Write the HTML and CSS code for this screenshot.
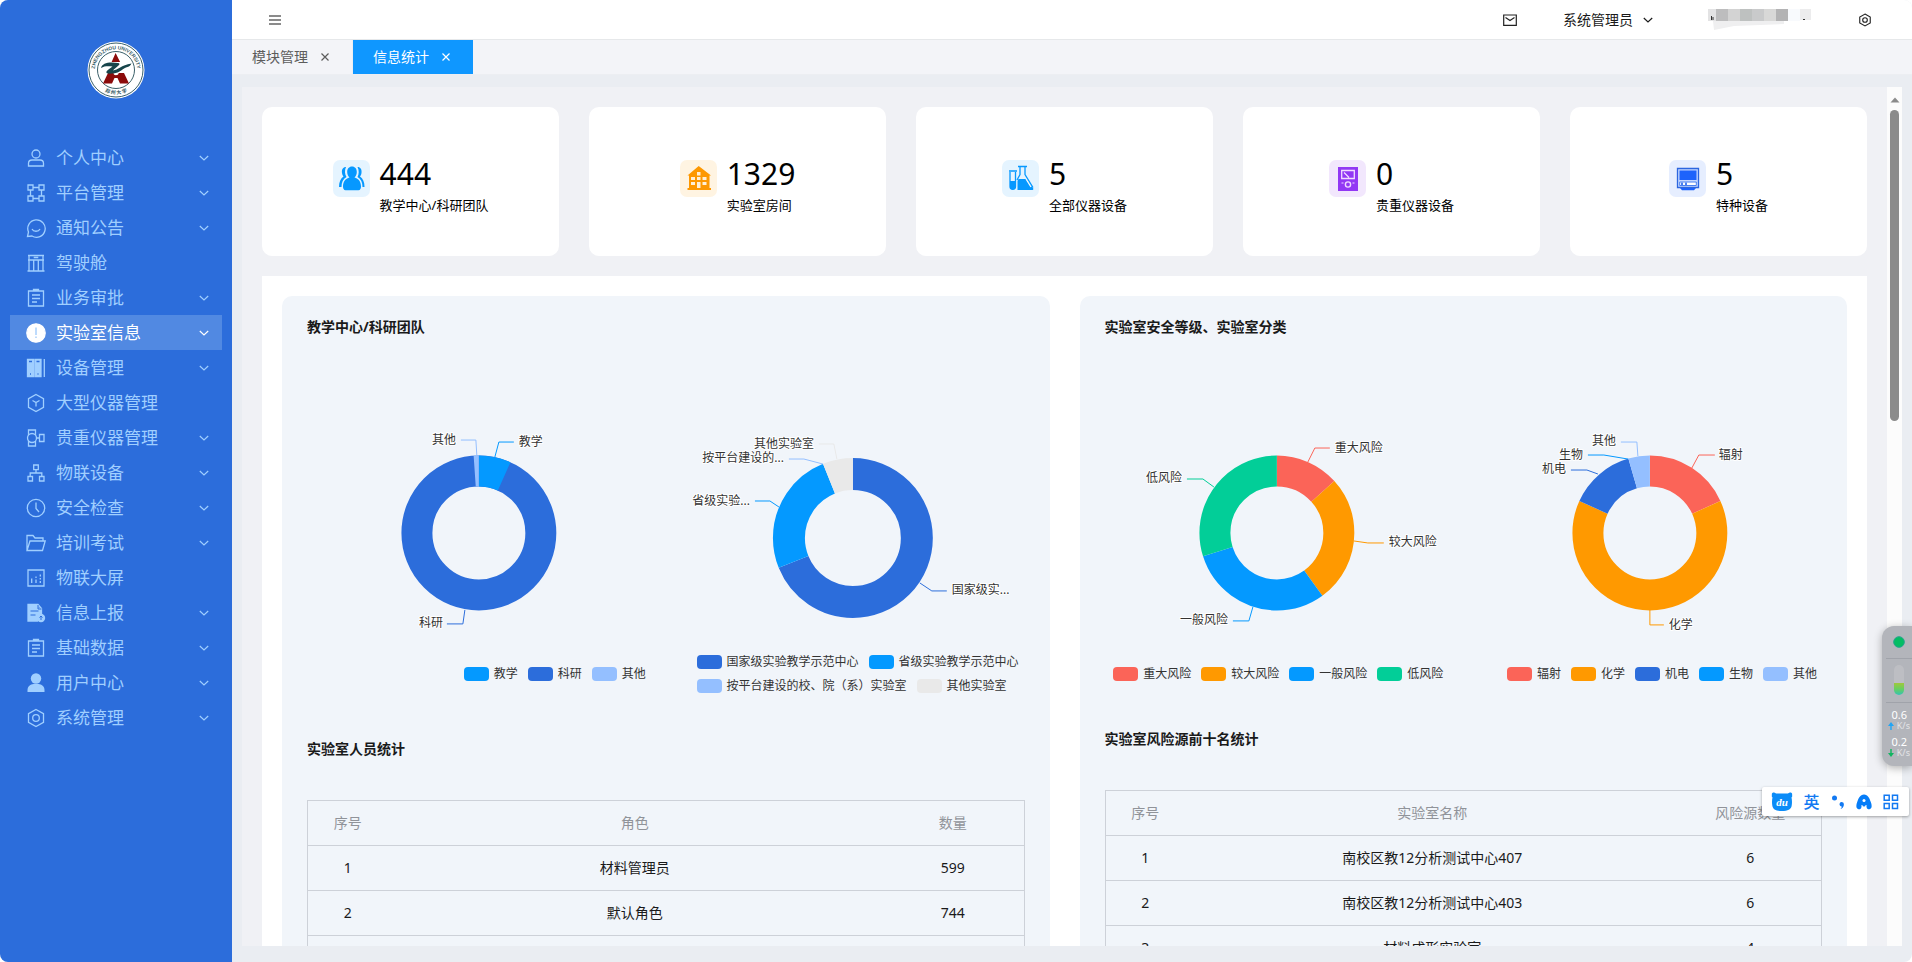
FILE: index.html
```html
<!DOCTYPE html>
<html lang="zh-CN">
<head>
<meta charset="utf-8">
<title>信息统计</title>
<link rel="stylesheet" href="styles.css">
</head>
<body>
<svg class="defs" aria-hidden="true">
  <symbol id="chev" viewBox="0 0 10 10"><path d="M.8 3 5 7l4.200-4" fill="none" stroke="currentColor" stroke-width="1.200"/></symbol>
  <symbol id="x" viewBox="0 0 10 10"><path d="M1.500 1.500l7 7M8.500 1.500l-7 7" fill="none" stroke="currentColor" stroke-width="1.200"/></symbol>
  <symbol id="clip" viewBox="0 0 20 20"><path d="M2.500 3h15v15h-15zM7.500 3V1.500h5V3M6 7h8M6 10.500h8M6 14h5"/></symbol>
  <symbol id="hexnut" viewBox="0 0 20 20"><path d="M10 1.500l7.500 4.250v8.500L10 18.500l-7.500-4.250v-8.500z"/><circle cx="10" cy="10" r="3.300"/></symbol>
</svg>
<div class="app">
  <aside class="sidebar">
    <div class="brand">
      <svg class="logo" viewBox="0 0 58 58" role="img" aria-label="ZHENGZHOU UNIVERSITY">
        <circle cx="29" cy="29" r="28.500" fill="#fff"/>
        <circle cx="29" cy="29" r="27" fill="none" stroke="#3b6069" stroke-width="1"/>
        <circle cx="29" cy="29" r="18.500" fill="none" stroke="#3b6069" stroke-width="1"/>
        <path id="arcTop" d="M9 36.500A21.200 21.200 0 1 1 49 36.500" fill="none"/>
        <path id="arcLow" d="M11.500 46A24.500 24.500 0 0 0 46.500 46" fill="none"/>
        <text class="seal"><textPath href="#arcTop" startOffset="50%" text-anchor="middle">ZHENGZHOU UNIVERSITY</textPath></text>
        <text class="seal seal-cn"><textPath href="#arcLow" startOffset="50%" text-anchor="middle">郑 州 大 学</textPath></text>
        <path d="M28.600 12l-4 9h8.500zM21 32h5.500c-.2 3 5 3 5.200 0H37l5 10.500h-9l-2.500-5.500h-3L25 42.500h-9z" fill="#8b0b0b"/>
        <path d="M14 27c1-5 8-6.500 17-5 1.500.3 2 1 1 2-2 2-5 4-6 5.500 5-.5 8-5.500 18.500-7-1 2-2 3-4 3.500-4 1-8 6-14 6.500-5 .4-8 .1-7-2 1-1.800 4-3.500 6-5-5-.4-8-.5-11.500 1.500z" fill="#17454b"/>
      </svg>
    </div>
    <nav class="menu">
      <button class="item"><svg class="ico" viewBox="0 0 20 20"><circle cx="10" cy="6" r="4"/><path d="M2.500 18v-2.500c0-2 1.500-3.500 3.500-3.500h8c2 0 3.500 1.500 3.500 3.500V18z"/></svg><span>个人中心</span><svg class="chev"><use href="#chev"/></svg></button>
      <button class="item"><svg class="ico" viewBox="0 0 20 20"><path d="M2 2h5v5H2zM13 2h5v5h-5zM2 13h5v5H2zM13 13h5v5h-5zM7 4.500h6M7 15.500h6M4.500 7v6M15.500 7v6"/></svg><span>平台管理</span><svg class="chev"><use href="#chev"/></svg></button>
      <button class="item"><svg class="ico" viewBox="0 0 20 20"><path d="M1.500 18.500l1-4.500A8.700 8.700 0 1 1 6 18zM6 11c1.500 3 6.500 3 8 0"/></svg><span>通知公告</span><svg class="chev"><use href="#chev"/></svg></button>
      <a class="item" href="#cockpit"><svg class="ico" viewBox="0 0 20 20"><path d="M2 2.500h16M3 2.500v15.500M17 2.500v15.500M2 7h16M7.700 7v11M12.300 7v11M1.500 18h17M7.700 4.500h4.600"/></svg><span>驾驶舱</span></a>
      <button class="item"><svg class="ico"><use href="#clip"/></svg><span>业务审批</span><svg class="chev"><use href="#chev"/></svg></button>
      <button class="item active"><svg class="ico" viewBox="0 0 20 20"><circle cx="10" cy="10" r="9.200" fill="#fff"/><path d="M10 4.500v7.500M10 13.500v1.500" stroke="#9cc8fa"/></svg><span>实验室信息</span><svg class="chev"><use href="#chev"/></svg></button>
      <button class="item"><svg class="ico" viewBox="0 0 20 20"><path d="M1.500 1.500h6v17h-6zM9 1.500h6v17H9z" fill="currentColor"/><path d="M18.300 1v18"/><path d="M3 3.500h3M10.500 3.500h3M4 16h1M11.500 16h1" stroke="#2c6ddb"/></svg><span>设备管理</span><svg class="chev"><use href="#chev"/></svg></button>
      <a class="item" href="#large"><svg class="ico" viewBox="0 0 20 20"><path d="M10 1.500l7.500 4.250v8.500L10 18.500l-7.500-4.250v-8.500zM6.500 7.500L10 9.500l3.500-2M10 9.500V13.500"/></svg><span>大型仪器管理</span></a>
      <button class="item"><svg class="ico" viewBox="0 0 20 20"><circle cx="6" cy="10" r="4.500"/><path d="M2.500 7V2h7v5M2.500 13v5h7v-5M10.500 10h3M13.500 6.500h4.500v7h-4.500z"/></svg><span>贵重仪器管理</span><svg class="chev"><use href="#chev"/></svg></button>
      <button class="item"><svg class="ico" viewBox="0 0 20 20"><path d="M7.700 2h4.600v4.600H7.700zM2 13.500h4.500V18H2zM13.500 13.500H18V18h-4.500zM10 6.600V10M4.200 13.500V10h11.600v3.500"/></svg><span>物联设备</span><svg class="chev"><use href="#chev"/></svg></button>
      <button class="item"><svg class="ico" viewBox="0 0 20 20"><circle cx="10" cy="10" r="8.700"/><path d="M10 4.500V10.500l3 3.500"/></svg><span>安全检查</span><svg class="chev"><use href="#chev"/></svg></button>
      <button class="item"><svg class="ico" viewBox="0 0 20 20"><path d="M1 17V2.500h6l2 2.500h8v3M1 17.500L4 8h15.200l-2.700 9.500z"/></svg><span>培训考试</span><svg class="chev"><use href="#chev"/></svg></button>
      <a class="item" href="#screen"><svg class="ico" viewBox="0 0 20 20"><path d="M2 2h16v16H2zM5.700 10.500V15M10 8.500v1.500M10 11.500V15M14.300 6.500v2M14.300 10v1.500M14.300 13v2"/></svg><span>物联大屏</span></a>
      <button class="item"><svg class="ico" viewBox="0 0 20 20"><path d="M2 1.500h10l3.500 4v6l-4 6.500H2zM12 1.500v4h3.500" fill="currentColor"/><circle cx="15" cy="15" r="4.200" fill="currentColor" stroke="none"/><path d="M4.500 8h8M4.500 12h5M15 13v4M13.500 14.500l1.500-1.500 1.500 1.500M12 2v4h3.500" stroke="#2c6ddb" stroke-width="1"/></svg><span>信息上报</span><svg class="chev"><use href="#chev"/></svg></button>
      <button class="item"><svg class="ico"><use href="#clip"/></svg><span>基础数据</span><svg class="chev"><use href="#chev"/></svg></button>
      <button class="item"><svg class="ico" viewBox="0 0 20 20"><g fill="currentColor" stroke="none"><circle cx="10" cy="5.500" r="5.200"/><path d="M1.500 19v-2c0-3.500 3-5.800 6-6h5c3 .2 6 2.500 6 6v2z"/></g></svg><span>用户中心</span><svg class="chev"><use href="#chev"/></svg></button>
      <button class="item"><svg class="ico"><use href="#hexnut"/></svg><span>系统管理</span><svg class="chev"><use href="#chev"/></svg></button>
    </nav>
  </aside>

  <div class="main">
    <header class="topbar">
      <button class="plain" aria-label="折叠菜单"><svg class="burger" viewBox="0 0 12 10"><path d="M0 1h12M0 5h12M0 9h12" stroke="#666" stroke-width="1.500"/></svg></button>
      <div class="tools">
        <button class="plain" aria-label="消息"><svg class="tool" viewBox="0 0 14 14"><path d="M.7 2h12.600v10.300H.7zM2.500 4.500L7 7.500l4.500-3" fill="none" stroke="#222" stroke-width="1.200"/></svg></button>
        <button class="plain user">系统管理员<svg class="chev"><use href="#chev"/></svg></button>
        <svg class="mask" viewBox="0 0 104 22" aria-hidden="true">
          <path d="M0 0h8v12H0z" fill="#e3e3e4"/><path d="M8 0h12v12H8z" fill="#bdbdbe"/><path d="M20 0h12v12H20z" fill="#d3d3d3"/><path d="M32 0h12v12H32z" fill="#bec1c0"/><path d="M44 0h12v12H44z" fill="#c9cacb"/><path d="M56 0h12v12H56z" fill="#d8d8d7"/><path d="M68 0h12v12H68z" fill="#b3b3b4"/><path d="M80 0h12v12H80z" fill="#f8fafd"/><path d="M92 0h11v11H92z" fill="#ececed"/>
          <path d="M5 12h71v3l-50 2-20 4z" fill="#efeff0"/><path d="M3.500 7v4M5 8v3M95 10.500h2" stroke="#333" stroke-width="1"/>
        </svg>
        <button class="plain" aria-label="设置"><svg class="tool gear"><use href="#hexnut"/></svg></button>
      </div>
    </header>
    <div class="tabs">
      <div class="tab"><a href="#modules">模块管理</a><button class="plain" aria-label="关闭模块管理"><svg class="close"><use href="#x"/></svg></button></div>
      <div class="tab current"><a href="#stats">信息统计</a><button class="plain" aria-label="关闭信息统计"><svg class="close"><use href="#x"/></svg></button></div>
    </div>

    <div class="view">
      <main class="page">
        <section class="stats">
          <article class="stat"><svg class="badge" viewBox="0 0 37 37"><rect width="37" height="37" rx="7" fill="#e5f4ff"/><g fill="#0698ff"><path d="M13 7c-3 0-4.500 2.500-4 6 .2 1.500.7 2.500 1.500 3.500C7.500 18.500 6 22 6 27h2.500c0-4.500 1.500-8 5-10-1.800-3-2-6.500-.5-10zM24.500 7c3 0 4.500 2.500 4 6-.2 1.500-.7 2.500-1.500 3.500C30 18.500 31.500 22 31.500 27H29.500c0-4.500-1.500-8-5-10 1.500-3 1.700-6.500 0-10z"/><path d="M19 6.500c3 0 4.800 2.300 4.800 5.500 0 2.600-1 4.500-2.300 5.500 4 1.200 6.500 4 6.500 9 0 2-.8 3.700-2.500 3.700h-13c-1.700 0-2.500-1.700-2.500-3.700 0-5 2.500-7.800 6.500-9-1.300-1-2.300-2.900-2.300-5.500 0-3.200 1.800-5.500 4.800-5.500z"/></g></svg><div><strong>444</strong><span>教学中心/科研团队</span></div></article>
          <article class="stat"><svg class="badge" viewBox="0 0 37 37"><rect width="37" height="37" rx="7" fill="#fff4e2"/><path d="M18.700 6L31 15.500h-1.500V28H31v2H7.500v-2H9V15.500H7.500z" fill="#fd9802"/><path d="M17 12h3.500v3.500H17zM11 17h4v3h-4zM17 17h3.500v3H17zM22.500 17h4v3h-4zM11 22h4v3h-4zM22.500 22h4v3h-4zM17 22h3.500v6H17z" fill="#fff0d8"/></svg><div><strong>1329</strong><span>实验室房间</span></div></article>
          <article class="stat"><svg class="badge" viewBox="0 0 37 37"><rect width="37" height="37" rx="7" fill="#e5f4ff"/><path d="M7 11h8M8 12v14.500a2.700 2.700 0 0 0 5.500 0V12" fill="none" stroke="#0698ff" stroke-width="1.300"/><path d="M8 21h5.500v6c0 3-5.500 3-5.500 0zM16.500 19h8l6.500 9c.7 1.200.3 2-1 2H15.500v-9z" fill="#0698ff"/><path d="M16 6.500h9M18 7v7.500L15 20M23 7v7.500l8 13" fill="none" stroke="#0698ff" stroke-width="1.300"/><path d="M24 19l5 8" stroke="#fff" stroke-width="1.200"/></svg><div><strong>5</strong><span>全部仪器设备</span></div></article>
          <article class="stat"><svg class="badge" viewBox="0 0 37 37"><rect width="37" height="37" rx="7" fill="#f2e7fd"/><path d="M9 7h20v24H9z" fill="#9238f4"/><path d="M12.700 10.500h12.600v8H12.700zM15 12.500l5 5" fill="none" stroke="#f2dcff" stroke-width="1.300"/><circle cx="19" cy="24.500" r="2.600" fill="none" stroke="#f2dcff" stroke-width="1.400"/><path d="M12.500 23h2M23.500 23h2" stroke="#f2dcff"/></svg><div><strong>0</strong><span>贵重仪器设备</span></div></article>
          <article class="stat"><svg class="badge" viewBox="0 0 37 37"><rect width="37" height="37" rx="7" fill="#e6eeff"/><path d="M8.500 8.500h21v19h-21z" fill="#c4d7ff" stroke="#2c66df" stroke-width="1.300"/><path d="M10.500 10.500h17v9.500h-17zM11 28h16l-2 2.300H13z" fill="#1e63fb"/><path d="M10.700 22h16.600v3.500H10.700z" fill="#fff" stroke="#4a80f0"/><path d="M12 22.500h2v2.500h-2zM16 22.500h2v2.500h-2z" fill="#4a80f0"/></svg><div><strong>5</strong><span>特种设备</span></div></article>
        </section>

        <section class="board">
          <article class="panel">
            <h2>教学中心/科研团队</h2>
            <div class="charts">
              <figure>
                <svg class="chart" viewBox="0 0 374 312">
                  <g class="ring ring-s" transform="rotate(-90 187 195)">
                    <circle cx="187" cy="195" r="62" pathLength="100" stroke="#2c6ddb"/>
                    <circle cx="187" cy="195" r="62" pathLength="100" stroke="#0499ff" stroke-dasharray="6.700 100"/>
                    <circle cx="187" cy="195" r="62" pathLength="100" stroke="#94bfff" stroke-dasharray="1.100 100" stroke-dashoffset="-98.900"/>
                  </g>
                  <g class="lead"><path d="M203 119l4-15h15" stroke="#0499ff"/><path d="M185 118l-1-16h-15" stroke="#94bfff"/><path d="M173 272l-2 14h-16" stroke="#2c6ddb"/></g>
                  <text x="227" y="108">教学</text><text class="e" x="164" y="106">其他</text><text class="e" x="151" y="289">科研</text>
                </svg>
                <figcaption><ul class="legend"><li><i class="sw sky"></i>教学</li><li><i class="sw blue"></i>科研</li><li><i class="sw light"></i>其他</li></ul></figcaption>
              </figure>
              <figure>
                <svg class="chart" viewBox="0 0 374 312">
                  <g class="ring ring-m" transform="rotate(-90 187 200)">
                    <circle cx="187" cy="200" r="64" pathLength="100" stroke="#2c6ddb" stroke-dasharray="68.900 100"/>
                    <circle cx="187" cy="200" r="64" pathLength="100" stroke="#0499ff" stroke-dasharray="25 100" stroke-dashoffset="-68.900"/>
                    <circle cx="187" cy="200" r="64" pathLength="100" stroke="#e9e9e9" stroke-dasharray="6.100 100" stroke-dashoffset="-93.900"/>
                  </g>
                  <g class="lead"><path d="M171 121l-3-15h-15" stroke="#e9e9e9"/><path d="M157 126l-19-5h-15" stroke="#94bfff"/><path d="M113 169l-9-6H89" stroke="#0499ff"/><path d="M254 245l12 8h15" stroke="#2c6ddb"/></g>
                  <text class="e" x="148" y="110">其他实验室</text><text class="e" x="118" y="124">按平台建设的...</text><text class="e" x="84" y="167">省级实验...</text><text x="286" y="256">国家级实...</text>
                </svg>
                <figcaption><ul class="legend legend-wrap"><li><i class="sw blue"></i>国家级实验教学示范中心</li><li><i class="sw sky"></i>省级实验教学示范中心</li><li><i class="sw light"></i>按平台建设的校、院（系）实验室</li><li><i class="sw gray"></i>其他实验室</li></ul></figcaption>
              </figure>
            </div>
            <h2 class="second">实验室人员统计</h2>
            <table>
              <thead><tr><th class="no">序号</th><th>角色</th><th class="num">数量</th></tr></thead>
              <tbody><tr><td>1</td><td>材料管理员</td><td>599</td></tr><tr><td>2</td><td>默认角色</td><td>744</td></tr><tr><td></td><td></td><td></td></tr></tbody>
            </table>
          </article>

          <article class="panel">
            <h2>实验室安全等级、实验室分类</h2>
            <div class="charts">
              <figure>
                <svg class="chart" viewBox="0 0 374 312">
                  <g class="ring ring-s" transform="rotate(-90 187 195)">
                    <circle cx="187" cy="195" r="62" pathLength="100" stroke="#fb6458" stroke-dasharray="13.300 100"/>
                    <circle cx="187" cy="195" r="62" pathLength="100" stroke="#ff9900" stroke-dasharray="26.700 100" stroke-dashoffset="-13.300"/>
                    <circle cx="187" cy="195" r="62" pathLength="100" stroke="#0499ff" stroke-dasharray="30.100 100" stroke-dashoffset="-40"/>
                    <circle cx="187" cy="195" r="62" pathLength="100" stroke="#02ce98" stroke-dasharray="29.900 100" stroke-dashoffset="-70.100"/>
                  </g>
                  <g class="lead"><path d="M218 124l7-14h15" stroke="#fb6458"/><path d="M264 203l14 2h16" stroke="#ff9900"/><path d="M163 269l-4 14h-16" stroke="#0499ff"/><path d="M124 149l-11-8H97" stroke="#02ce98"/></g>
                  <text x="245" y="114">重大风险</text><text x="299" y="208">较大风险</text><text class="e" x="138" y="286">一般风险</text><text class="e" x="92" y="144">低风险</text>
                </svg>
                <figcaption><ul class="legend"><li><i class="sw red"></i>重大风险</li><li><i class="sw orange"></i>较大风险</li><li><i class="sw sky"></i>一般风险</li><li><i class="sw green"></i>低风险</li></ul></figcaption>
              </figure>
              <figure>
                <svg class="chart" viewBox="0 0 374 312">
                  <g class="ring ring-s" transform="rotate(-90 187 195)">
                    <circle cx="187" cy="195" r="62" pathLength="100" stroke="#fb6458" stroke-dasharray="18.200 100"/>
                    <circle cx="187" cy="195" r="62" pathLength="100" stroke="#ff9900" stroke-dasharray="63.600 100" stroke-dashoffset="-18.200"/>
                    <circle cx="187" cy="195" r="62" pathLength="100" stroke="#2c6ddb" stroke-dasharray="13.700 100" stroke-dashoffset="-81.800"/>
                    <circle cx="187" cy="195" r="62" pathLength="100" stroke="#94bfff" stroke-dasharray="4.500 100" stroke-dashoffset="-95.500"/>
                  </g>
                  <g class="lead"><path d="M229 130l7-13h16" stroke="#fb6458"/><path d="M187 272v15h14" stroke="#ff9900"/><path d="M135 136l-11-4h-16" stroke="#2c6ddb"/><path d="M165 121l-24-4h-16" stroke="#0499ff"/><path d="M175 118l-1-14h-16" stroke="#94bfff"/></g>
                  <text x="256" y="121">辐射</text><text x="206" y="291">化学</text><text class="e" x="103" y="135">机电</text><text class="e" x="120" y="121">生物</text><text class="e" x="153" y="107">其他</text>
                </svg>
                <figcaption><ul class="legend"><li><i class="sw red"></i>辐射</li><li><i class="sw orange"></i>化学</li><li><i class="sw blue"></i>机电</li><li><i class="sw sky"></i>生物</li><li><i class="sw light"></i>其他</li></ul></figcaption>
              </figure>
            </div>
            <h2 class="second tight">实验室风险源前十名统计</h2>
            <table>
              <thead><tr><th class="no">序号</th><th>实验室名称</th><th class="num">风险源数量</th></tr></thead>
              <tbody><tr><td>1</td><td>南校区教12分析测试中心407</td><td>6</td></tr><tr><td>2</td><td>南校区教12分析测试中心403</td><td>6</td></tr><tr><td>3</td><td>材料成形实验室</td><td>4</td></tr></tbody>
            </table>
          </article>
        </section>
      </main>
      <div class="scroll" aria-hidden="true"><svg class="up" viewBox="0 0 10 6"><path d="M5 .5L9.500 5.500H.5z" fill="#8b8b8b"/></svg><div class="thumb"></div></div>
    </div>
  </div>

  <div class="monitor">
    <svg class="gauge" viewBox="0 0 30 78" aria-hidden="true">
      <defs><linearGradient id="lvl" x2="0" y2="1"><stop offset="0" stop-color="#a0c83c"/><stop offset=".5" stop-color="#68cf60"/><stop offset="1" stop-color="#34c3b4"/></linearGradient></defs>
      <circle cx="17" cy="16" r="5.300" fill="#04bd63" stroke="#22a58c" stroke-width="1"/>
      <path d="M4 32.500h26M4 76.500h26" stroke="#a0a3aa"/>
      <rect x="12" y="39" width="10" height="30" rx="5" fill="#bdbec3"/>
      <path d="M12 57h10v7a5 5 0 0 1-10 0z" fill="url(#lvl)"/>
    </svg>
    <div class="rate"><b>0.6</b><span><svg viewBox="0 0 6 8"><path d="M3 0L6 4H3.700v4H2.300V4H0z" fill="#20a5f5"/></svg>K/s</span></div>
    <div class="rate"><b>0.2</b><span><svg viewBox="0 0 6 8"><path d="M3 8L0 4h2.300V0h1.400v4H6z" fill="#10b560"/></svg>K/s</span></div>
  </div>

  <div class="ime">
    <svg class="bear" viewBox="0 0 22 20" role="img" aria-label="du"><path d="M1 3C0 1 3-.5 5 1.500h12c2-2 5-.5 4 1.500.5 1 .3 2-.5 2.500.5 2 .7 5 .2 8-.5 4-4 5.500-9.700 5.500S1.800 17.500 1.300 13.500c-.5-3-.3-6 .2-8C.7 5 .5 4 1 3z" fill="#0b8cf8"/><text x="11" y="14" class="du">du</text></svg>
    <button class="plain lang">英</button>
    <button class="plain" aria-label="标点"><svg class="ime-i" viewBox="0 0 14 16"><circle cx="3.500" cy="4" r="2.500" fill="#1279f2"/><path d="M8.500 10a2.200 2.200 0 1 1 4.400.4c0 2.200-1.400 4-3.600 4.600 1-.8 1.500-1.700 1.400-2.600-1.300 0-2.200-1-2.200-2.400z" fill="#1279f2"/></svg></button>
    <button class="plain" aria-label="助手"><svg class="ime-i" viewBox="0 0 16 16"><path d="M8 .5c4 0 5.500 4 6.800 7.500 1.300 3.500 1.300 6.500-1.300 7.200-1.500.3-2.500-.4-3-1.700V11H5.500v2.500c-.5 1.300-1.500 2-3 1.700C-.1 14.500-.1 11.500 1.200 8 2.500 4.500 4 .5 8 .5z" fill="#067df8"/><circle cx="8" cy="6.500" r="1.500" fill="#fff"/><path d="M5.500 15c.3-3 1-4.500 2.500-4.500s2.200 1.500 2.500 4.500z" fill="#fff"/><circle cx="8" cy="11" r="1.600" fill="#067df8"/></svg></button>
    <button class="plain" aria-label="工具箱"><svg class="ime-i" viewBox="0 0 16 16"><path d="M1.200 1.200h5v5h-5zM9.500 1.200h5v5h-5zM1.200 9.500h5v5h-5zM9.500 9.500h5v5h-5z" fill="none" stroke="#1279f2" stroke-width="1.500"/></svg></button>
  </div>
</div>
</body>
</html>
```
FILE: styles.css
```css
* { box-sizing: border-box; }
body {
  margin: 0;
  background: #fff;
  color: #1a1a1a;
  font: 14px/22px "Noto Sans", "Noto Sans CJK SC", sans-serif;
}
button { font: inherit; color: inherit; border: 0; background: none; padding: 0; cursor: pointer; }
a { color: inherit; text-decoration: none; }
svg { display: block; flex: none; }
h2, ul, figure { margin: 0; padding: 0; }
ul { list-style: none; }
.defs { position: absolute; width: 0; height: 0; }
.plain { display: flex; align-items: center; }
.chev { width: 10px; height: 10px; }

.app {
  position: relative;
  display: grid;
  grid-template-columns: 232px minmax(0, 1fr);
  height: 100vh;
  overflow: hidden;
  border-radius: 8px;
  background: #eaedf2;
}

/* sidebar */
.sidebar { background: #2c6ddb; }
.brand { height: 140px; display: flex; justify-content: center; align-items: center; }
.logo { width: 58px; height: 58px; }
.seal { font: bold 5px "Liberation Sans", sans-serif; fill: #3b6069; }
.seal-cn { font-family: "Noto Sans CJK SC", sans-serif; }
.menu { display: flex; flex-direction: column; padding: 0 10px; }
.item {
  display: flex;
  align-items: center;
  height: 35px;
  padding: 0 13px 0 16px;
  color: #a0cfff;
  font-size: 17px;
  text-align: left;
}
.item span { flex: 1; margin-left: 10px; }
.item.active { background: #5189e2; color: #fff; }
.ico { width: 20px; height: 20px; fill: none; stroke: currentColor; stroke-width: 1.3; }

/* top bar and tabs */
.main { display: flex; flex-direction: column; min-width: 0; min-height: 0; }
.topbar {
  display: flex;
  justify-content: space-between;
  align-items: center;
  height: 40px;
  padding: 0 40px 0 37px;
  background: #fff;
  border-bottom: 1px solid #e6e8ea;
}
.burger { width: 12px; height: 10px; }
.tools { display: flex; align-items: center; gap: 46px; }
.tool { width: 14px; height: 14px; }
.gear { fill: none; stroke: #222; stroke-width: 1.6; }
.user { gap: 10px; }
.mask { width: 104px; height: 22px; margin-left: 9px; }
.tabs { display: flex; height: 35px; background: #f3f4f8; border-bottom: 1px solid #eceef2; }
.tab { display: flex; align-items: center; gap: 12px; padding: 0 22px 0 20px; color: #5c5c5c; border-right: 1px solid #eceef2; }
.tab.current { background: #0f97ff; color: #fff; border-right: 0; }
.close { width: 10px; height: 10px; }

/* scrolling page */
.view { flex: 1; display: flex; min-height: 0; padding: 12px 10px 16px; }
.page { flex: 1; min-width: 0; overflow: hidden; padding: 20px; background: #f0f1f5; }
.scroll { width: 15px; background: #fcfcfc; display: flex; flex-direction: column; align-items: center; padding-top: 10px; }
.up { width: 10px; height: 6px; }
.thumb { width: 9px; height: 311px; margin-top: 7px; border-radius: 5px; background: #8b8b8b; }

.stats { display: grid; grid-template-columns: repeat(5, 1fr); gap: 30px; }
.stat {
  display: flex;
  justify-content: center;
  align-items: flex-start;
  gap: 10px;
  min-height: 149px;
  padding: 47px 10px 20px;
  border-radius: 10px;
  background: #fff;
  color: #000;
}
.badge { width: 37px; height: 37px; margin-top: 6px; }
.stat strong { display: block; font-size: 30px; font-weight: 400; line-height: 40px; }
.stat span { display: block; font-size: 13px; }

.board { display: grid; grid-template-columns: repeat(2, minmax(0, 1fr)); gap: 30px; margin-top: 20px; padding: 20px; background: #fff; }
.panel { padding: 20px 25px; border-radius: 10px; background: #f1f5fa; }
.panel h2 { font-size: 14px; line-height: 22px; font-weight: 700; }
.panel .second { margin: 40px 0; }
.panel .tight { margin-top: 30px; }

/* charts */
.charts { display: grid; grid-template-columns: 1fr 1fr; margin: 0 -15px; }
.chart { width: 100%; height: 312px; overflow: visible; }
.chart text { font-size: 12px; fill: #333; stroke: #fff; stroke-width: 2px; stroke-linejoin: round; paint-order: stroke; }
.chart .e { text-anchor: end; }
.ring circle { fill: none; }
.ring-s { stroke-width: 31px; }
.ring-m { stroke-width: 32px; }
.lead path { fill: none; stroke-width: 1px; }
figcaption { display: flex; justify-content: flex-end; align-items: center; height: 48px; padding-right: 20px; }
.legend { display: flex; flex-wrap: wrap; column-gap: 10px; }
.legend-wrap { max-width: 323px; }
.legend li { display: flex; align-items: center; gap: 5px; font-size: 12px; line-height: 24px; color: #333; white-space: nowrap; }
.sw { width: 25px; height: 14px; border-radius: 4px; }
.sky { background: #0499ff; }
.blue { background: #2c6ddb; }
.light { background: #94bfff; }
.gray { background: #e9e9e9; }
.red { background: #fb6458; }
.orange { background: #ff9900; }
.green { background: #02ce98; }

/* tables */
table { width: 100%; table-layout: fixed; border-collapse: collapse; border: 1px solid #cdd1d8; }
tr { border-bottom: 1px solid #cdd1d8; }
th, td { height: 45px; padding: 0; text-align: center; font-weight: 400; }
th { color: #909399; }
.no { width: 80px; }
.num { width: 142px; }

/* floating desktop widgets */
.monitor {
  position: absolute;
  right: 0;
  top: 626px;
  width: 30px;
  padding-bottom: 8px;
  border-radius: 12px 0 0 12px;
  background: #b3b5bb;
  box-shadow: 0 2px 8px rgba(0, 0, 0, .3);
  color: #fff;
}
.gauge { width: 30px; height: 78px; }
.rate { display: flex; flex-direction: column; align-items: flex-end; padding: 5px 2px 0 0; font-size: 10px; line-height: 11px; }
.rate b { padding-right: 3px; font-weight: 400; font-size: 11px; }
.rate span { display: flex; align-items: center; gap: 3px; color: #e3e4e7; font-size: 9px; }
.rate svg { width: 6px; height: 8px; }
.ime {
  position: absolute;
  right: 3px;
  top: 787px;
  display: flex;
  align-items: center;
  justify-content: space-between;
  width: 147px;
  height: 29px;
  padding: 0 10px 0 9px;
  border-radius: 2px;
  background: #fff;
  box-shadow: 0 1px 3px rgba(0, 0, 0, .35);
}
.bear { width: 22px; height: 20px; }
.du { font: italic bold 11px "Liberation Serif", serif; fill: #fff; text-anchor: middle; }
.lang { font-size: 16px; font-weight: 500; color: #1279f2; }
.ime-i { width: 16px; height: 16px; }
```
